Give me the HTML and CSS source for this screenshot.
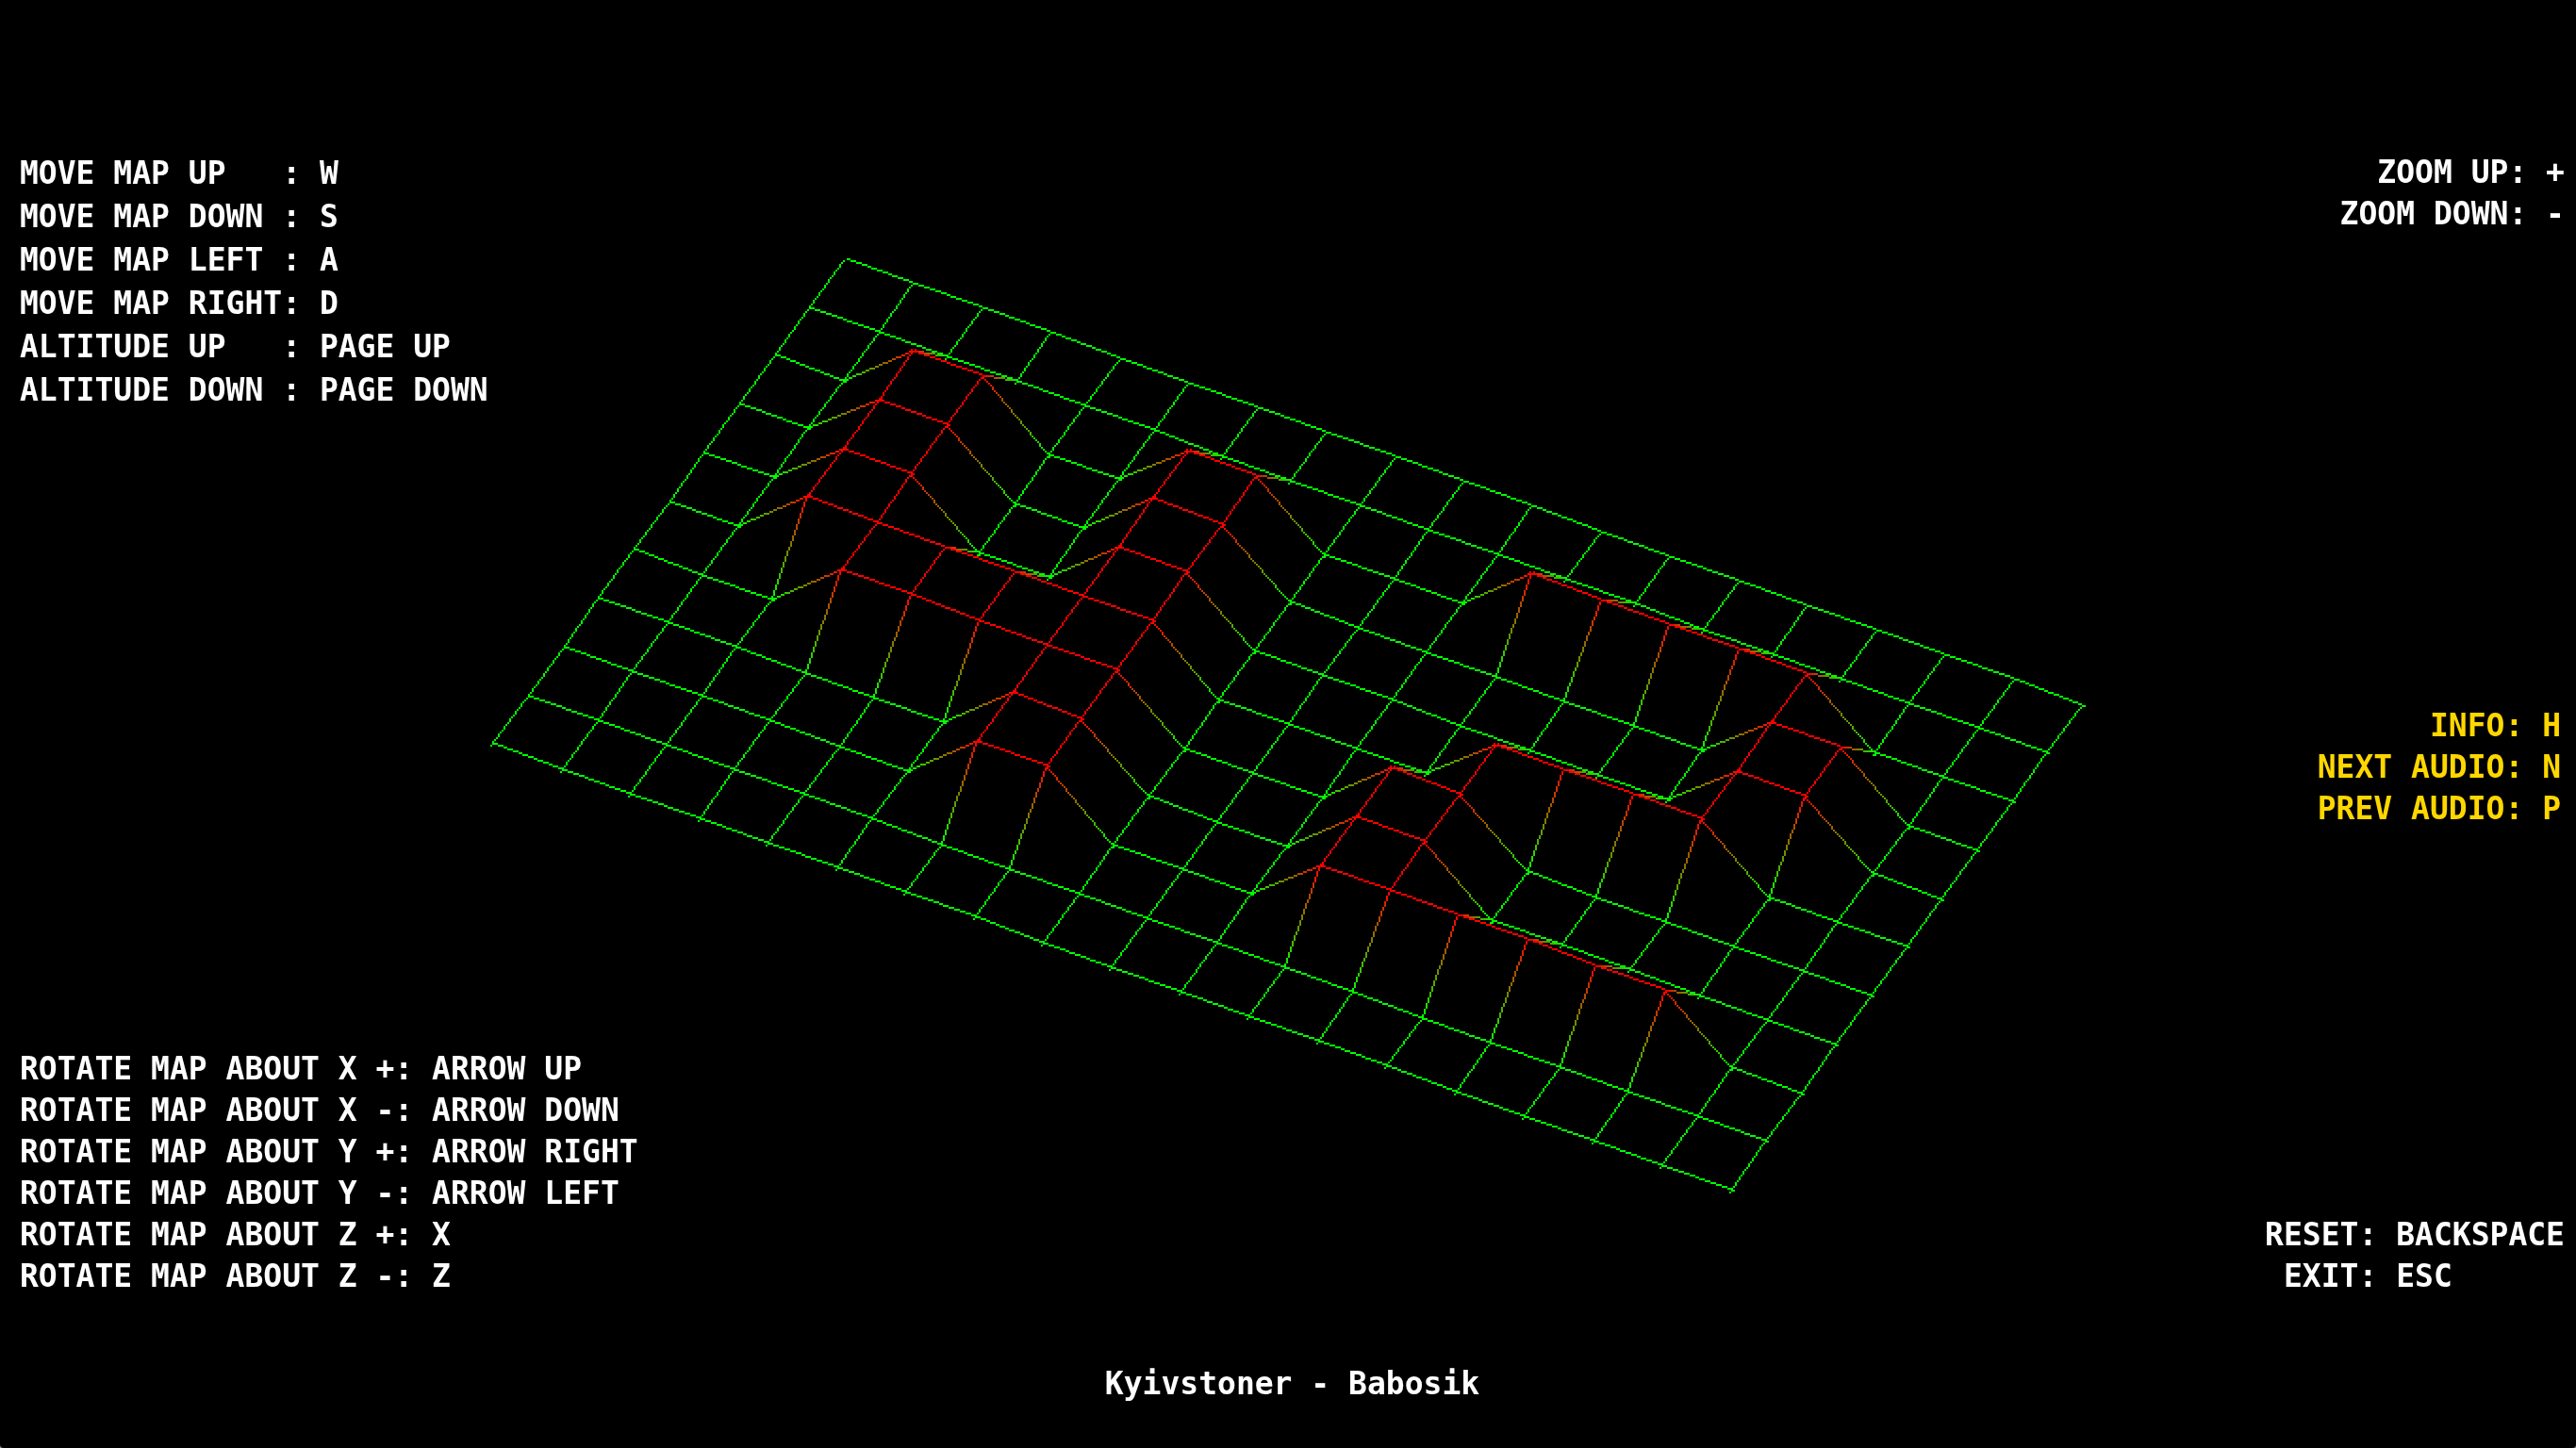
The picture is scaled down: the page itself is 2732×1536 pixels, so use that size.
FILE: index.html
```html
<!DOCTYPE html>
<html lang="en">
<head>
<meta charset="utf-8">
<title>FdF</title>
<link rel="stylesheet" href="styles.css">
</head>
<body>
<main class="scene">
  <canvas class="map" id="map" width="1366" height="768"></canvas>
  <div class="hud">
    <div class="controls">
      <ul class="keys keys-move">
        <li>MOVE MAP UP   : W</li>
        <li>MOVE MAP DOWN : S</li>
        <li>MOVE MAP LEFT : A</li>
        <li>MOVE MAP RIGHT: D</li>
        <li>ALTITUDE UP   : PAGE UP</li>
        <li>ALTITUDE DOWN : PAGE DOWN</li>
      </ul>
      <ul class="keys keys-right">
        <li>ZOOM UP: +</li>
        <li>ZOOM DOWN: -</li>
      </ul>
      <ul class="keys keys-bottom">
        <li>ROTATE MAP ABOUT X +: ARROW UP</li>
        <li>ROTATE MAP ABOUT X -: ARROW DOWN</li>
        <li>ROTATE MAP ABOUT Y +: ARROW RIGHT</li>
        <li>ROTATE MAP ABOUT Y -: ARROW LEFT</li>
        <li>ROTATE MAP ABOUT Z +: X</li>
        <li>ROTATE MAP ABOUT Z -: Z</li>
      </ul>
      <div class="side">
        <ul class="keys keys-right keys-audio">
          <li>INFO: H</li>
          <li>NEXT AUDIO: N</li>
          <li>PREV AUDIO: P</li>
        </ul>
        <ul class="keys keys-app">
          <li>RESET: BACKSPACE</li>
          <li> EXIT: ESC</li>
        </ul>
      </div>
    </div>
    <p class="track">Kyivstoner - Babosik</p>
  </div>
</main>
<script src="map.js"></script>
</body>
</html>
```

FILE: styles.css
```css
html {
  background: #888;
}

body {
  margin: 0;
  color: #fff;
  font: bold 33px/44px "DejaVu Sans Mono", monospace;
}

/* The map and the key hints share one grid cell. */
.scene {
  display: grid;
  min-height: 100vh;
  background: #000;
  border-radius: 0 0 4px 4px;
}

.map,
.hud {
  grid-area: 1 / 1;
}

.map {
  width: 100%;
  align-self: center;
  image-rendering: pixelated;
}

.hud {
  display: flex;
  flex-direction: column;
  gap: 70px;
  padding: 161px 12px 46px 21px;
}

.controls {
  flex: 1;
  display: grid;
  grid-template-columns: 1fr auto;
  grid-template-rows: 14fr 15fr;
}

.keys {
  margin: 0;
  padding: 0;
  list-style: none;
}

.keys li {
  white-space: pre;
}

.keys-move {
  line-height: 46px;
}

.keys-right {
  text-align: right;
}

.keys-bottom {
  align-self: end;
}

.side {
  display: flex;
  flex-direction: column;
  justify-content: space-between;
}

.keys-audio {
  padding-right: 4px;
  color: #ffd700;
}

.track {
  margin: 0;
  text-align: center;
}
```

FILE: map.js
```js
// Height map: each digit is one vertex, 1 is raised.
const rows = [
  "0000000000000000000",
  "0000000000000000000",
  "0011001100011111000",
  "0011001100000001100",
  "0011001100000001100",
  "0011111100001111000",
  "0001111100011000000",
  "0000001100011000000",
  "0000001100011111100",
  "0000000000000000000",
  "0000000000000000000"
];

const canvas = document.getElementById("map");
const ctx = canvas.getContext("2d");

// Screen steps for one column, one row and one level of height.
const COL = [36.45, 13.15];
const ROW = [-18.65, 25.75];
const UP = [0.7, -28.6];

function project(c, r) {
  const z = Number(rows[r][c]);
  const dc = c - 9;
  const dr = r - 5;
  return {
    x: Math.round(682.7 + dc * COL[0] + dr * ROW[0] + z * UP[0]),
    y: Math.round(384 + dc * COL[1] + dr * ROW[1] + z * UP[1]),
    z: z
  };
}

// Steps pixel by pixel, blending green (low) to red (high).
function line(a, b) {
  const steps = Math.max(Math.abs(b.x - a.x), Math.abs(b.y - a.y));
  for (let i = 1; i <= steps + 1; i++) {
    const t = Math.min(i / steps, 1);
    const z = a.z + (b.z - a.z) * t;
    const x = Math.floor(a.x + (b.x - a.x) * i / steps);
    const y = Math.floor(a.y + (b.y - a.y) * i / steps);
    ctx.fillStyle = `rgb(${Math.round(255 * z)}, ${Math.round(255 * (1 - z))}, 0)`;
    ctx.fillRect(x, y, 1, 1);
  }
}

for (let r = 0; r < rows.length; r++) {
  for (let c = 0; c < rows[r].length; c++) {
    if (c + 1 < rows[r].length) line(project(c, r), project(c + 1, r));
    if (r + 1 < rows.length) line(project(c, r), project(c, r + 1));
  }
}
```
